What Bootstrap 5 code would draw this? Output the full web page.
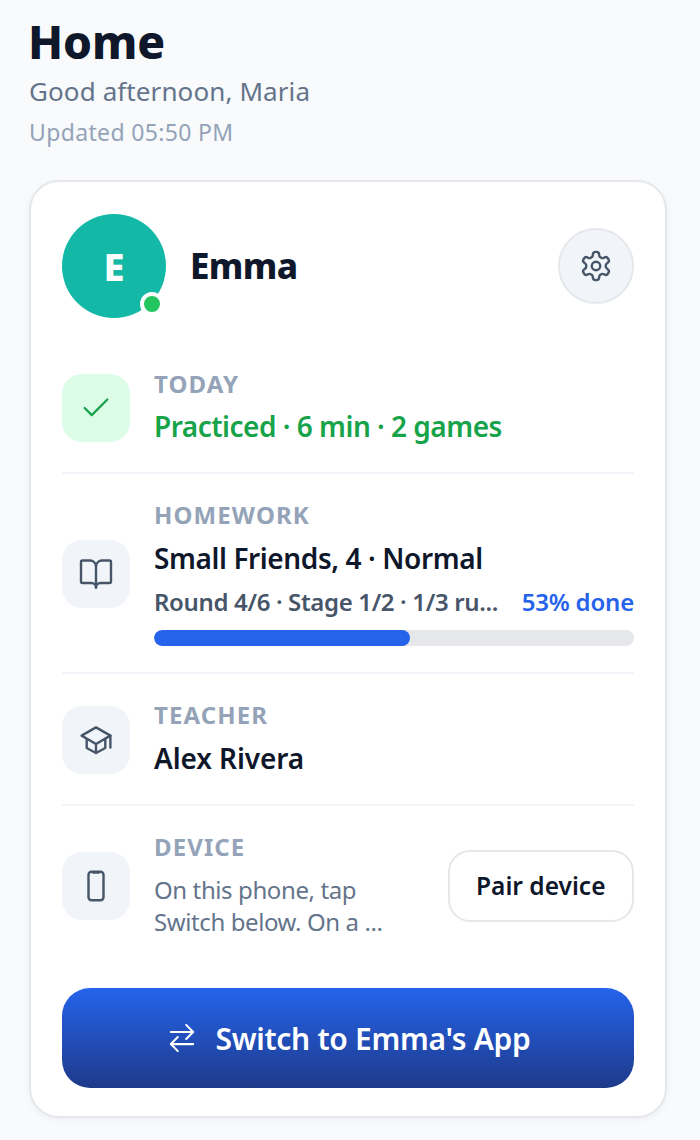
<!DOCTYPE html>
<html lang="en">
<head>
  <meta charset="UTF-8" />
  <meta name="viewport" content="width=device-width, initial-scale=1" />
  <title>Home</title>
  <link href="https://cdn.jsdelivr.net/npm/bootstrap@5.3.0/dist/css/bootstrap.min.css" rel="stylesheet" />
  <style>
    body { background: #f8fafc; font-family: "Noto Sans", "Liberation Sans", sans-serif; color: #0f172a; }
    .page-wrap { padding: 13px 33px 0 29px; width: 700px; height: 1140px; overflow: hidden; }
    .page-title { font-size: 46px; font-weight: 800; line-height: 56px; margin: 0 0 0 -1px; letter-spacing: -.1px; }
    .greeting { font-size: 26px; line-height: 36px; color: #64748b; margin-top: 4px; letter-spacing: .1px; }
    .updated { font-size: 23px; line-height: 30px; color: #94a3b8; margin-top: 8px; letter-spacing: .35px; }
    .home-panel { margin-top: 33px; background: #fff; border: 2px solid #e5e7eb; border-radius: 30px; padding: 32px 31px 28px; box-shadow: 0 2px 6px rgba(15,23,42,.05); }
    .avatar-big { width: 104px; height: 104px; border-radius: 50%; background: #14b8a6; color: #fff; font-size: 38px; font-weight: 800; }
    .avatar-dot { position: absolute; right: 2px; bottom: 2px; width: 24px; height: 24px; border-radius: 50%; background: #22c55e; border: 4px solid #fff; }
    .kid-name { font-size: 35px; font-weight: 800; margin-left: 24px; letter-spacing: -.6px; }
    .gear-btn { width: 76px; height: 76px; border-radius: 50%; background: #f1f5f9; border: 2px solid #e5e7eb; padding: 0; }
    .gear-btn svg { width: 34px; height: 34px; }
    .info-row { display: flex; align-items: center; gap: 24px; padding: 26px 0; border-bottom: 2px solid #f1f5f9; }
    .info-row:last-of-type { border-bottom: 0; }
    .tile { flex: 0 0 68px; width: 68px; height: 68px; margin-top: 2px; border-radius: 20px; background: #f1f5f9; }
    .tile svg { width: 36px; height: 36px; color: #475569; }
    .tile-green { margin-top: 0; background: #dcfce7; }
    .tile-green svg { width: 34px; height: 34px; color: #16a34a; }
    .row-today { margin-top: 26px; padding: 25px 0; }
    .info-label { font-size: 24px; line-height: 30px; font-weight: 700; color: #94a3b8; letter-spacing: 1.1px; }
    .info-value { font-size: 28px; line-height: 40px; font-weight: 600; letter-spacing: -.4px; margin-top: 8px; }
    .text-practiced { color: #16a34a; letter-spacing: -.5px; margin-top: 7px; padding-bottom: 1px; }
    .teacher-name { letter-spacing: -.1px; }
    .round-line { font-size: 24px; line-height: 32px; font-weight: 600; color: #475569; letter-spacing: -.35px; margin-top: 8px; white-space: nowrap; }
    .done-line { font-size: 24px; line-height: 32px; font-weight: 600; color: #2563eb; letter-spacing: -.2px; margin-top: 8px; white-space: nowrap; }
    .hw-track { height: 16px; margin-top: 12px; background: #e5e7eb; border-radius: 8px; }
    .hw-track .progress-bar { background: #2563eb; border-radius: 8px; }
    .device-note { font-size: 24px; line-height: 32px; color: #64748b; letter-spacing: -.4px; margin-top: 12px; width: 250px; }
    .pair-btn { height: 72px; margin-top: 2px; padding: 0 26.5px; background: #fff; border: 2px solid #e5e7eb; border-radius: 22px; font-size: 24.5px; font-weight: 600; color: #0f172a; white-space: nowrap; }
    .switch-btn { height: 100px; margin-top: 24px; padding-left: 16px; border: 0; border-radius: 28px; background: linear-gradient(180deg, #2563eb, #1e3a8a); color: #fff; font-size: 30px; font-weight: 600; letter-spacing: -.3px; gap: 20px; }
    .switch-btn:hover { color: #fff; }
    .switch-btn svg { width: 26px; height: 30px; }
  </style>
</head>
<body>
  <div class="page-wrap">
    <h1 class="page-title">Home</h1>
    <div class="greeting">Good afternoon, Maria</div>
    <div class="updated">Updated 05:50 PM</div>

    <div class="home-panel">
      <div class="d-flex align-items-center">
        <div class="position-relative">
          <div class="avatar-big d-flex align-items-center justify-content-center">E</div>
          <span class="avatar-dot"></span>
        </div>
        <div class="kid-name flex-grow-1">Emma</div>
        <button class="gear-btn d-flex align-items-center justify-content-center" aria-label="Settings">
          <svg viewBox="0 0 24 24" fill="none" stroke="#475569" stroke-width="1.7" stroke-linecap="round" stroke-linejoin="round"><path d="M12.22 2h-.44a2 2 0 0 0-2 2v.18a2 2 0 0 1-1 1.73l-.43.25a2 2 0 0 1-2 0l-.15-.08a2 2 0 0 0-2.73.73l-.22.38a2 2 0 0 0 .73 2.73l.15.1a2 2 0 0 1 1 1.72v.51a2 2 0 0 1-1 1.74l-.15.09a2 2 0 0 0-.73 2.73l.22.38a2 2 0 0 0 2.73.73l.15-.08a2 2 0 0 1 2 0l.43.25a2 2 0 0 1 1 1.73V20a2 2 0 0 0 2 2h.44a2 2 0 0 0 2-2v-.18a2 2 0 0 1 1-1.73l.43-.25a2 2 0 0 1 2 0l.15.08a2 2 0 0 0 2.73-.73l.22-.39a2 2 0 0 0-.73-2.73l-.15-.08a2 2 0 0 1-1-1.74v-.5a2 2 0 0 1 1-1.74l.15-.09a2 2 0 0 0 .73-2.73l-.22-.38a2 2 0 0 0-2.73-.73l-.15.08a2 2 0 0 1-2 0l-.43-.25a2 2 0 0 1-1-1.73V4a2 2 0 0 0-2-2z"/><circle cx="12" cy="12" r="3"/></svg>
        </button>
      </div>

      <div class="info-row row-today">
        <div class="tile tile-green d-flex align-items-center justify-content-center">
          <svg viewBox="0 0 24 24" fill="none" stroke="currentColor" stroke-width="1.6" stroke-linecap="round" stroke-linejoin="round"><path d="M20 6 9 17l-5-5"/></svg>
        </div>
        <div class="flex-grow-1">
          <div class="info-label">TODAY</div>
          <div class="info-value text-practiced">Practiced · 6 min · 2 games</div>
        </div>
      </div>

      <div class="info-row">
        <div class="tile d-flex align-items-center justify-content-center">
          <svg viewBox="0 0 24 24" fill="none" stroke="currentColor" stroke-width="1.6" stroke-linecap="round" stroke-linejoin="round"><path d="M12 7v14"/><path d="M3 18a1 1 0 0 1-1-1V4a1 1 0 0 1 1-1h5a4 4 0 0 1 4 4 4 4 0 0 1 4-4h5a1 1 0 0 1 1 1v13a1 1 0 0 1-1 1h-6a3 3 0 0 0-3 3 3 3 0 0 0-3-3z"/></svg>
        </div>
        <div class="flex-grow-1">
          <div class="info-label">HOMEWORK</div>
          <div class="info-value">Small Friends, 4 · Normal</div>
          <div class="d-flex justify-content-between">
            <div class="round-line">Round 4/6 · Stage 1/2 · 1/3 ru...</div>
            <div class="done-line">53% done</div>
          </div>
          <div class="progress hw-track">
            <div class="progress-bar" style="width: 53.4%"></div>
          </div>
        </div>
      </div>

      <div class="info-row">
        <div class="tile d-flex align-items-center justify-content-center">
          <svg viewBox="0 0 24 24" fill="none" stroke="currentColor" stroke-width="1.6" stroke-linecap="round" stroke-linejoin="round"><path d="M12 3.6 2.4 9.1l9.6 5.6 9.6-5.6z"/><path d="M5.8 11.5v5.8l6.2 3.4 6.2-3.4v-5.8"/><path d="M12 14.7v6"/><path d="M21.6 9.1V17"/></svg>
        </div>
        <div class="flex-grow-1">
          <div class="info-label">TEACHER</div>
          <div class="info-value teacher-name">Alex Rivera</div>
        </div>
      </div>

      <div class="info-row">
        <div class="tile d-flex align-items-center justify-content-center">
          <svg viewBox="0 0 24 24" fill="none" stroke="currentColor" stroke-width="1.6" stroke-linecap="round" stroke-linejoin="round"><rect x="7" y="2.5" width="10" height="19" rx="2"/><path d="M10 3h4"/></svg>
        </div>
        <div class="flex-grow-1">
          <div class="info-label">DEVICE</div>
          <div class="device-note">On this phone, tap Switch below. On a ...</div>
        </div>
        <button class="pair-btn">Pair device</button>
      </div>

      <button class="switch-btn btn w-100 d-flex align-items-center justify-content-center">
        <svg viewBox="0 0 28 32" preserveAspectRatio="none" fill="none" stroke="currentColor" stroke-width="2.2" stroke-linecap="round" stroke-linejoin="round"><path d="M2 9.5h24"/><path d="M18.5 2 26 9.5 18.5 17"/><path d="M26 22.5H2"/><path d="M9.5 15 2 22.5 9.5 30"/></svg>
        Switch to Emma's App
      </button>
    </div>
  </div>
</body>
</html>
